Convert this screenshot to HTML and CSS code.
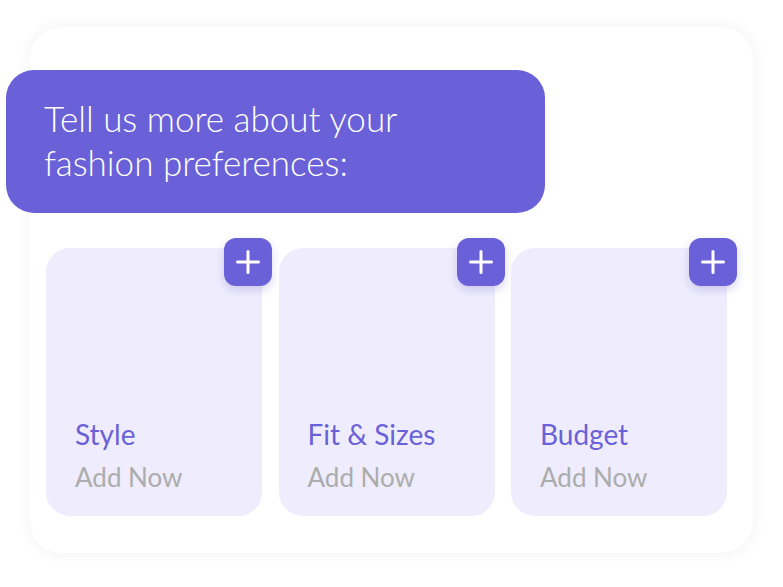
FILE: index.html
```html
<!DOCTYPE html>
<html>
<head>
<meta charset="utf-8">
<link rel="stylesheet" href="styles.css">
</head>
<body>
<div class="panel">
  <div class="bubble">
    <p class="bubble-text">Tell us more about your<br>fashion preferences:</p>
  </div>
  <div class="cards">
    <div class="card">
      <button class="add" aria-label="Add style"><svg width="24" height="24" viewBox="0 0 24 24"><path d="M12 1.5V22.5M1.5 12H22.5" stroke="#fff" stroke-width="3" stroke-linecap="round" fill="none"/></svg></button>
      <div class="card-title">Style</div>
      <div class="card-sub">Add Now</div>
    </div>
    <div class="card">
      <button class="add" aria-label="Add fit"><svg width="24" height="24" viewBox="0 0 24 24"><path d="M12 1.5V22.5M1.5 12H22.5" stroke="#fff" stroke-width="3" stroke-linecap="round" fill="none"/></svg></button>
      <div class="card-title">Fit &amp; Sizes</div>
      <div class="card-sub">Add Now</div>
    </div>
    <div class="card">
      <button class="add" aria-label="Add budget"><svg width="24" height="24" viewBox="0 0 24 24"><path d="M12 1.5V22.5M1.5 12H22.5" stroke="#fff" stroke-width="3" stroke-linecap="round" fill="none"/></svg></button>
      <div class="card-title">Budget</div>
      <div class="card-sub">Add Now</div>
    </div>
  </div>
</div>
</body>
</html>
```
FILE: styles.css
```css
html, body {
  margin: 0;
  padding: 0;
  background: #ffffff;
}
body {
  font-family: Lato, "Open Sans", sans-serif;
  width: 783px;
  height: 587px;
  overflow: hidden;
}
.panel {
  box-sizing: border-box;
  margin: 27px 0 0 30px;
  width: 723px;
  height: 526px;
  background: #fff;
  border-radius: 32px;
  box-shadow: 0 0 14px 4px rgba(0, 0, 0, 0.035);
  padding: 43px 25px 37px 16px;
  display: flex;
  flex-direction: column;
}
.bubble {
  box-sizing: border-box;
  margin-left: -40px;
  width: 539px;
  height: 143px;
  background: #6a61d8;
  border-radius: 28px;
  padding: 26px 38px 0;
}
.bubble-text {
  margin: 0;
  color: #fff;
  font-weight: 300;
  font-size: 35px;
  line-height: 44px;
}
.cards {
  margin-top: 35px;
  display: grid;
  grid-template-columns: repeat(3, 216px);
  column-gap: 16.5px;
}
.card {
  position: relative;
  box-sizing: border-box;
  height: 268px;
  background: #efedfd;
  border-radius: 24px;
  padding: 0 0 22px 29px;
  display: flex;
  flex-direction: column;
  justify-content: flex-end;
}
.add {
  position: absolute;
  top: -10px;
  right: -10px;
  width: 48px;
  height: 48px;
  border: none;
  padding: 0;
  border-radius: 12px;
  background: #6a61d8;
  box-shadow: 0 4px 10px rgba(80, 70, 180, 0.22);
  display: flex;
  align-items: center;
  justify-content: center;
}
.card-title {
  color: #6a61d8;
  font-size: 28px;
  line-height: 34px;
}
.card-sub {
  margin-top: 9px;
  color: #acacac;
  font-size: 26px;
  line-height: 34px;
}
```
